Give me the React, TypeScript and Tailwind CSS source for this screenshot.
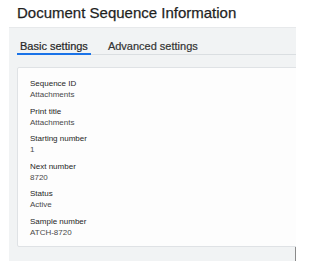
const fields = [
	{ label: "Sequence ID", value: "Attachments" },
	{ label: "Print title", value: "Attachments" },
	{ label: "Starting number", value: "1" },
	{ label: "Next number", value: "8720" },
	{ label: "Status", value: "Active" },
	{ label: "Sample number", value: "ATCH-8720" },
]

export default function App() {
	return (
		<div className="h-[279px] w-[330px] bg-white font-['Liberation_Sans',Arial,sans-serif]">
			<h1 className="pl-[17px] pt-[4px] text-[15px] leading-[18px] font-medium text-[#1f1f1f] [-webkit-text-stroke:0.25px_#1f1f1f]">
				Document Sequence Information
			</h1>
			<div className="relative mt-[5px] ml-[9px] h-[234px] w-[287px] overflow-hidden border-t border-[#e7e9eb] bg-[#f1f3f4]">
				<div className="mt-[11px] ml-[8px] flex gap-[14px] border-b border-[#dadee1]">
					<button className="-mb-px border-b-2 border-[#1a73e8] px-[3px] text-[11px] leading-[14px] font-medium text-[#262626] [-webkit-text-stroke:0.2px_#262626]">
						Basic settings
					</button>
					<button className="-mb-px border-b-2 border-transparent px-[3px] text-[11px] leading-[14px] font-medium text-[#333] [-webkit-text-stroke:0.2px_#333]">
						Advanced settings
					</button>
				</div>
				<div className="mt-[12px] ml-[8px] flex h-[180px] w-[300px] flex-col gap-[5.6px] rounded-[2px] border border-[#dfe2e5] bg-[#fdfdfd] pt-[10px] pl-[12px]">
					{fields.map((f) => (
						<div key={f.label} className="flex flex-col text-[8px] leading-[11px]">
							<span className="text-[#262626]">{f.label}</span>
							<span className="text-[#4a4a4a]">{f.value}</span>
						</div>
					))}
				</div>
				<span className="absolute right-0 bottom-0 h-[14px] w-px bg-[#8a8a8a]" />
			</div>
		</div>
	)
}
